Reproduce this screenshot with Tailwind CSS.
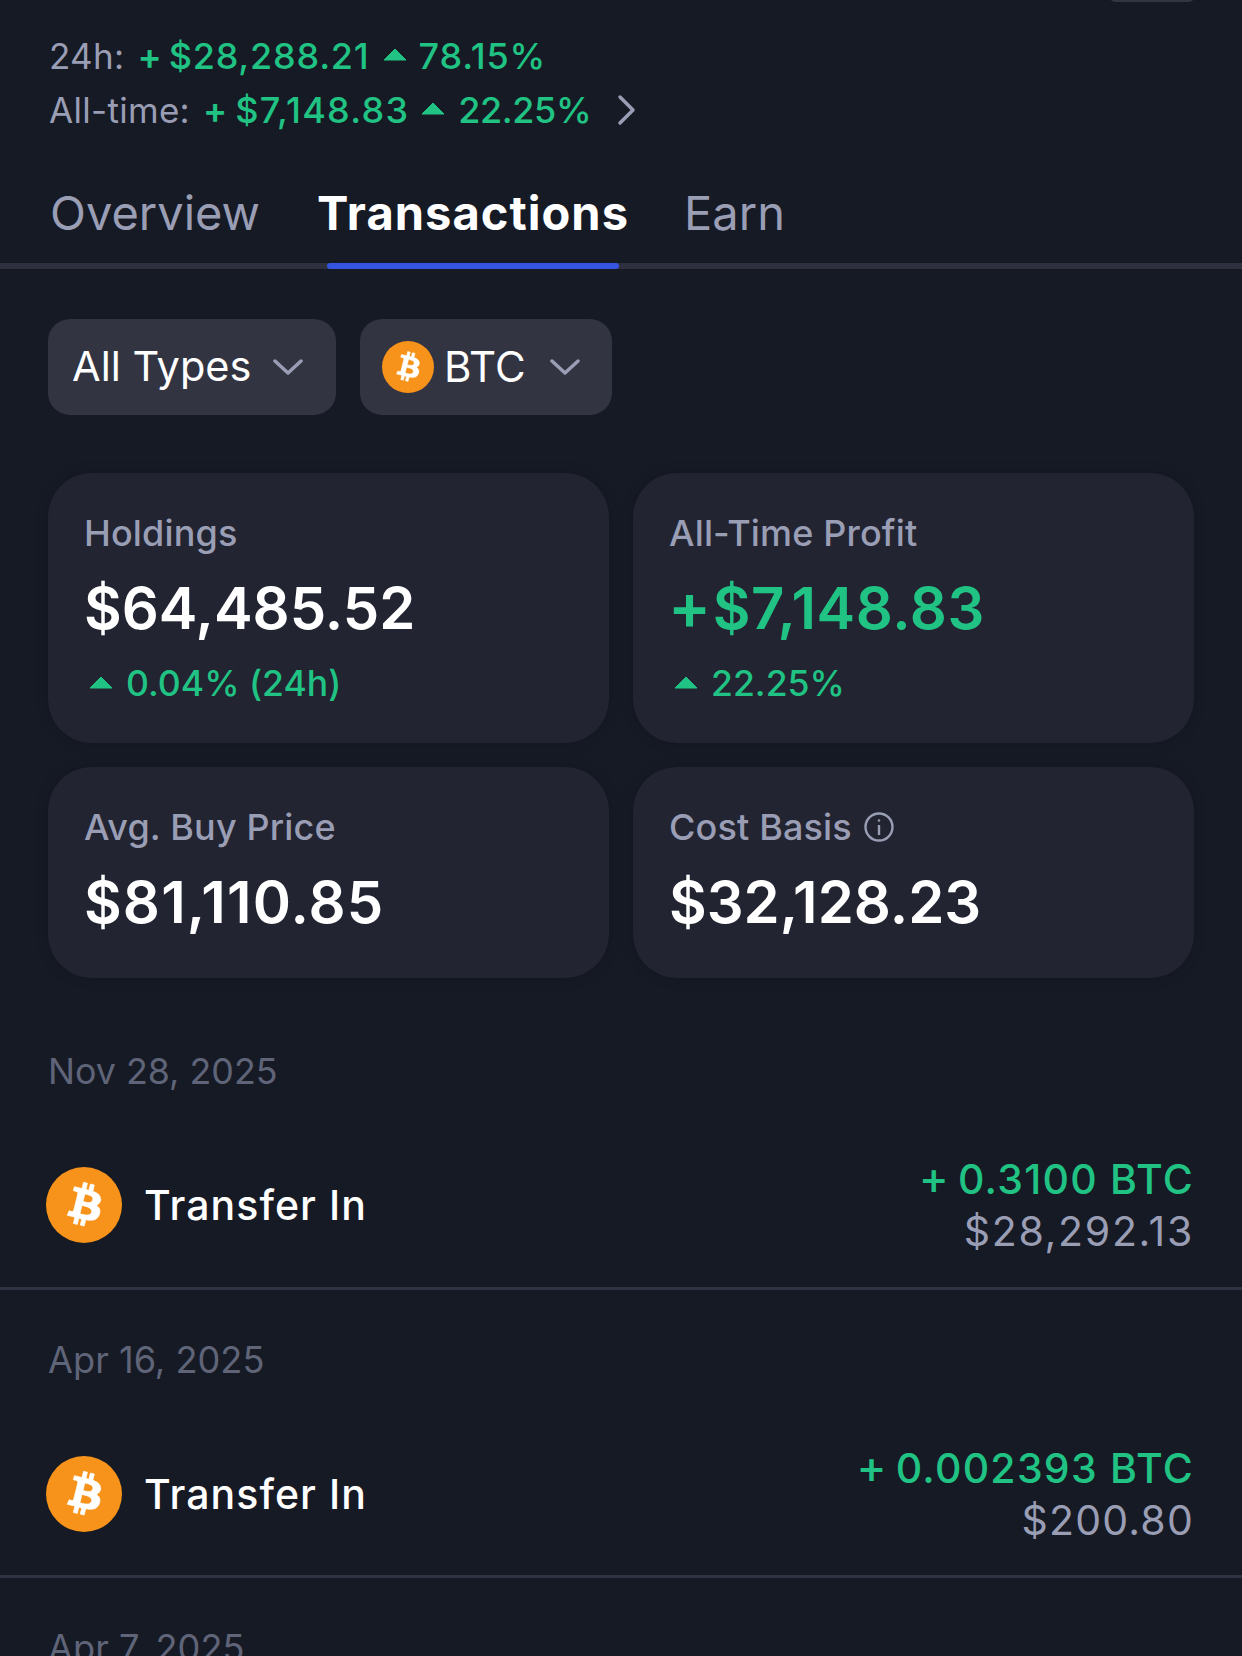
<!DOCTYPE html>
<html>
<head>
<meta charset="utf-8">
<script src="https://cdn.jsdelivr.net/npm/@tailwindcss/browser@4"></script>
</head>
<body class="bg-[#161a25]">
<svg width="0" height="0" class="absolute">
  <defs>
    <symbol id="btc" viewBox="0 0 64 64">
      <circle cx="32" cy="32" r="32" fill="#f7931a"/>
      <path transform="translate(3.4 2.6) scale(.92)" fill="#fff" stroke="#fff" stroke-width=".7" d="M46.1 27.4c.6-4.2-2.6-6.5-7-8l1.4-5.7-3.5-.9-1.4 5.6c-.9-.2-1.9-.4-2.8-.7l1.4-5.6-3.5-.9-1.4 5.7c-.8-.2-1.5-.3-2.2-.5l-4.8-1.2-.9 3.7s2.6.6 2.5.6c1.4.4 1.7 1.3 1.6 2l-1.6 6.5c.1 0 .2.1.4.1l-.4-.1-2.3 9.1c-.2.4-.6 1.1-1.6.8 0 .1-2.5-.6-2.5-.6l-1.7 4 4.5 1.1c.8.2 1.7.4 2.5.6l-1.4 5.8 3.5.9 1.4-5.7c1 .3 1.9.5 2.8.7l-1.4 5.6 3.5.9 1.5-5.8c6 1.1 10.5.7 12.4-4.7 1.5-4.4-.1-6.9-3.2-8.5 2.3-.5 4-2 4.5-5.1zm-8 11.2c-1.1 4.4-8.4 2-10.8 1.4l1.9-7.7c2.4.6 10 1.8 8.9 6.3zm1.1-11.3c-1 4-7.1 2-9.1 1.5l1.8-7c2 .5 8.3 1.4 7.3 5.5z"/>
    </symbol>
  </defs>
</svg>
<main class="w-[1242px] h-[1656px] overflow-hidden relative font-['Inter',sans-serif] text-white">
  <div class="absolute right-[48px] top-[-8px] w-[84px] h-[10px] rounded-[6px] bg-[#323442]"></div>

  <section class="pt-[29px] pl-[49px] text-[35px] leading-[54px] h-[164px]">
    <div class="flex items-center h-[54px]">
      <span class="text-[#9a9eb5] mr-[13px] tracking-[0.3px]">24h:</span>
      <span class="text-[#20c383] font-semibold text-[36px]">+</span>
      <span class="text-[#20c383] font-medium ml-[7px] text-[36px] tracking-[0.8px]">$28,288.21</span>
      <svg class="ml-[13px] mt-[-3px]" width="24" height="13" viewBox="0 0 24 13"><path d="M12 1 L23 12 H1 Z" fill="#20c383" stroke="#20c383" stroke-linejoin="round"/></svg>
      <span class="text-[#20c383] font-medium ml-[12px] text-[36px] tracking-[0.8px]">78.15%</span>
    </div>
    <div class="flex items-center h-[54px]">
      <span class="text-[#9a9eb5] mr-[13px] tracking-[0.3px]">All-time:</span>
      <span class="text-[#20c383] font-semibold text-[36px]">+</span>
      <span class="text-[#20c383] font-medium ml-[8px] text-[36px] tracking-[1.25px]">$7,148.83</span>
      <svg class="ml-[12px] mt-[-3px]" width="24" height="13" viewBox="0 0 24 13"><path d="M12 1 L23 12 H1 Z" fill="#20c383" stroke="#20c383" stroke-linejoin="round"/></svg>
      <span class="text-[#20c383] font-medium ml-[13px] text-[36px] tracking-[-0.4px]">22.25%</span>
      <svg class="ml-[26px]" width="20" height="32" viewBox="0 0 20 32" fill="none" stroke="#9a9eb5" stroke-width="3.5" stroke-linecap="round" stroke-linejoin="round"><path d="M3 3 L16 16 L3 29"/></svg>
    </div>
  </section>

  <nav class="h-[105px] border-b-[6px] border-[#2e303f] flex pl-[50px] text-[47px] relative">
    <span class="text-[#9a9eb5] mt-[21px] leading-[56px]">Overview</span>
    <span class="relative font-bold ml-[57px] mt-[21px] leading-[56px] h-[84px] tracking-[1.05px]">Transactions
      <span class="absolute left-[10px] right-[10px] top-[78px] h-[6px] rounded-[3px] bg-[#3555e0]"></span>
    </span>
    <span class="text-[#9a9eb5] ml-[55px] mt-[21px] leading-[56px]">Earn</span>
  </nav>

  <div class="flex gap-[24px] pl-[48px] mt-[50px]">
    <div class="h-[96px] w-[288px] rounded-[22px] bg-[#323442] flex items-center pl-[24px] text-[41.5px]">
      <span class="mt-[-2px]">All Types</span>
      <svg class="ml-[22px]" width="30" height="18" viewBox="0 0 30 18" fill="none" stroke="#9a9eb5" stroke-width="3.5" stroke-linecap="round" stroke-linejoin="round"><path d="M2 3 L15 15 L28 3"/></svg>
    </div>
    <div class="h-[96px] w-[252px] rounded-[22px] bg-[#323442] flex items-center pl-[22px] text-[42px]">
      <svg width="52" height="52"><use href="#btc"/></svg>
      <span class="ml-[10px] mt-[-2px]">BTC</span>
      <svg class="ml-[24px]" width="30" height="18" viewBox="0 0 30 18" fill="none" stroke="#9a9eb5" stroke-width="3.5" stroke-linecap="round" stroke-linejoin="round"><path d="M2 3 L15 15 L28 3"/></svg>
    </div>
  </div>

  <div class="grid grid-cols-[561px_561px] gap-[24px] pl-[48px] mt-[58px]">
    <div class="h-[270px] rounded-[44px] bg-[#222431] shadow-[0_0_14px_rgba(0,0,0,0.14)] pl-[36px] pt-[39px]">
      <div class="text-[36px] leading-[42px] text-[#9a9eb5] font-medium tracking-[0.15px]">Holdings</div>
      <div class="text-[58px] leading-[72px] font-semibold mt-[18px]">$64,485.52</div>
      <div class="flex items-center text-[35.6px] leading-[42px] text-[#20c383] font-medium mt-[19px]">
        <svg class="ml-[5px] mt-[-4px]" width="24" height="13" viewBox="0 0 24 13"><path d="M12 1 L23 12 H1 Z" fill="#20c383" stroke="#20c383" stroke-linejoin="round"/></svg>
        <span class="ml-[13px]">0.04% (24h)</span>
      </div>
    </div>
    <div class="h-[270px] rounded-[44px] bg-[#222431] shadow-[0_0_14px_rgba(0,0,0,0.14)] pl-[36px] pt-[39px]">
      <div class="text-[36px] leading-[42px] text-[#9a9eb5] font-medium tracking-[0.15px]">All-Time Profit</div>
      <div class="text-[58px] leading-[72px] font-semibold mt-[16px] text-[#20c383] flex items-baseline tracking-[0.55px]"><span class="text-[64px] ml-[-1px]">+</span><span class="ml-[1px]">$7,148.83</span></div>
      <div class="flex items-center text-[35.6px] leading-[42px] text-[#20c383] font-medium mt-[19px]">
        <svg class="ml-[5px] mt-[-4px]" width="24" height="13" viewBox="0 0 24 13"><path d="M12 1 L23 12 H1 Z" fill="#20c383" stroke="#20c383" stroke-linejoin="round"/></svg>
        <span class="ml-[13px]">22.25%</span>
      </div>
    </div>
    <div class="h-[211px] rounded-[44px] bg-[#222431] shadow-[0_0_14px_rgba(0,0,0,0.14)] pl-[36px] pt-[39px]">
      <div class="text-[36px] leading-[42px] text-[#9a9eb5] font-medium tracking-[0.15px]">Avg. Buy Price</div>
      <div class="text-[58px] leading-[72px] font-semibold mt-[18px] tracking-[1.15px]">$81,110.85</div>
    </div>
    <div class="h-[211px] rounded-[44px] bg-[#222431] shadow-[0_0_14px_rgba(0,0,0,0.14)] pl-[36px] pt-[39px]">
      <div class="flex items-center text-[36px] leading-[42px] text-[#9a9eb5] font-medium tracking-[0.15px]">
        <span>Cost Basis</span>
        <svg class="ml-[12px]" width="30" height="30" viewBox="0 0 30 30" fill="none" stroke="#9a9eb5" stroke-width="2.4"><circle cx="15" cy="15" r="13.5"/><path d="M15 13 V23"/><circle cx="15" cy="8.5" r="1.2" fill="#9a9eb5" stroke="none"/></svg>
      </div>
      <div class="text-[58px] leading-[72px] font-semibold mt-[18px]">$32,128.23</div>
    </div>
  </div>

  <section class="mt-[71px]">
    <div class="h-[241px] border-b-[3px] border-[#2f3242] box-border">
      <div class="pl-[48px] text-[35.8px] leading-[44px] text-[#5f6478]">Nov 28, 2025</div>
      <div class="flex items-center justify-between pl-[46px] pr-[48px] mt-[60px]">
        <div class="flex items-center">
          <svg width="76" height="76"><use href="#btc"/></svg>
          <span class="ml-[22px] mt-[2px] text-[41px] font-medium tracking-[1.05px]">Transfer In</span>
        </div>
        <div class="text-right text-[41px] leading-[52px]">
          <div class="text-[#20c383] font-medium tracking-[1.25px]"><span class="text-[45px] leading-none">+</span><span class="ml-[8px]">0.3100 BTC</span></div>
          <div class="text-[#9a9eb5] tracking-[1.7px]">$28,292.13</div>
        </div>
      </div>
    </div>
    <div class="h-[288px] border-b-[3px] border-[#2f3242] box-border pt-[48px]">
      <div class="pl-[48px] text-[36.2px] leading-[44px] text-[#5f6478]">Apr 16, 2025</div>
      <div class="flex items-center justify-between pl-[46px] pr-[48px] mt-[60px]">
        <div class="flex items-center">
          <svg width="76" height="76"><use href="#btc"/></svg>
          <span class="ml-[22px] mt-[2px] text-[41px] font-medium tracking-[1.05px]">Transfer In</span>
        </div>
        <div class="text-right text-[41px] leading-[52px]">
          <div class="text-[#20c383] font-medium tracking-[1.25px]"><span class="text-[45px] leading-none">+</span><span class="ml-[8px]">0.002393 BTC</span></div>
          <div class="text-[#9a9eb5] tracking-[1.2px]">$200.80</div>
        </div>
      </div>
    </div>
    <div class="pt-[48px] pl-[48px] text-[36.2px] leading-[44px] text-[#5f6478]">Apr 7, 2025</div>
  </section>
</main>
</body>
</html>
